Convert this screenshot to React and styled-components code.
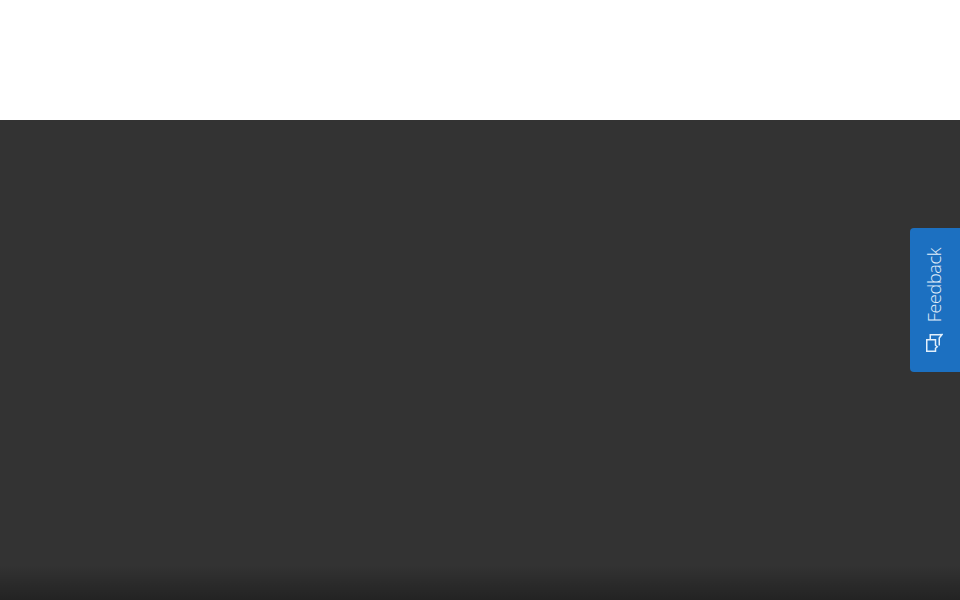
import React from 'react'
import styled, { createGlobalStyle } from 'styled-components'

const GlobalStyle = createGlobalStyle`
  html, body {
    margin: 0;
    padding: 0;
    height: 100%;
    overflow: hidden;
    font-family: 'Open Sans', 'Liberation Sans', sans-serif;
  }
  #root {
    height: 100%;
  }
`

const Page = styled.div`
  display: flex;
  flex-direction: column;
  height: 600px;
`

const Header = styled.header`
  height: 120px;
  flex-shrink: 0;
  background: #fff;
`

const Main = styled.main`
  flex: 1;
  background-color: #333;
  background-image: linear-gradient(to bottom, rgba(0, 0, 0, 0) 445px, rgba(0, 0, 0, 0.32) 480px);
`

const FeedbackTab = styled.button`
  position: fixed;
  top: 228px;
  right: 0;
  width: 50px;
  height: 144px;
  box-sizing: border-box;
  padding: 20px 0 19px;
  border: 0;
  border-radius: 4px 0 0 4px;
  background: #1c70c1;
  color: #e2effb;
  display: flex;
  flex-direction: column-reverse;
  align-items: center;
  justify-content: space-between;
  font-family: inherit;
`

const FeedbackLabel = styled.span`
  writing-mode: vertical-rl;
  transform: rotate(180deg);
  font-size: 18px;
  font-weight: 300;
  letter-spacing: -0.35px;
  line-height: 20px;
  margin-right: 2px;
`

const FeedbackIcon = styled.svg`
  width: 18px;
  height: 20px;
  margin-left: -2px;
`

function App() {
  return (
    <>
      <GlobalStyle />
      <Page>
        <Header />
        <Main />
      </Page>
      <FeedbackTab>
        <FeedbackIcon viewBox='0 0 18 20' fill='none' stroke='currentColor' strokeWidth='1.5'>
          <path d='M1.75 6.75h8.75v5.5l1.75 1.5-1.75 1.5v3H1.75z' />
          <path d='M5.25 6.5V1.75h8.25l3.5-0.25-2.75 3.5v7.5' />
        </FeedbackIcon>
        <FeedbackLabel>Feedback</FeedbackLabel>
      </FeedbackTab>
    </>
  )
}

export default App
